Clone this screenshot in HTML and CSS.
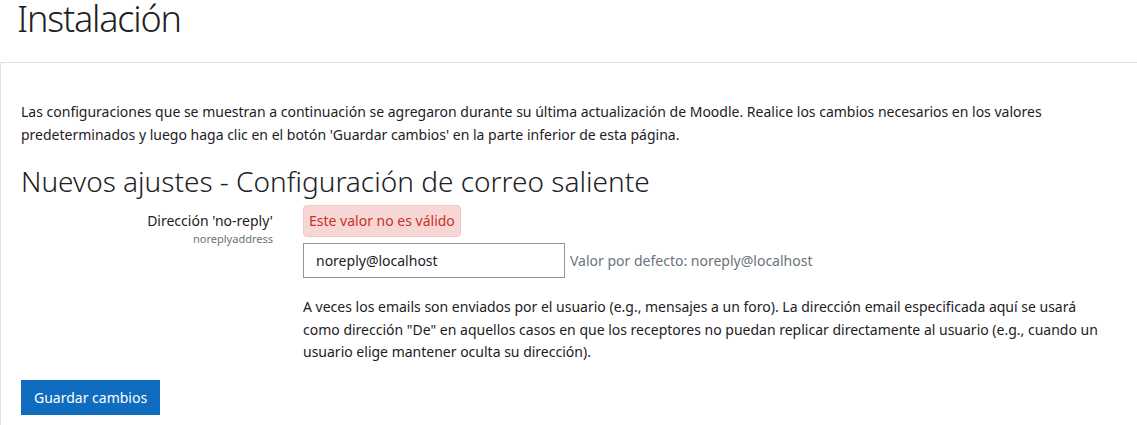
FILE: index.html
```html
<!DOCTYPE html>
<html lang="es">
<head>
<meta charset="utf-8">
<title>Instalación</title>
<link rel="stylesheet" href="styles.css">
</head>
<body>
<h1 class="page-title">Instalación</h1>
<div class="box">
  <p class="intro">Las configuraciones que se muestran a continuación se agregaron durante su última actualización de Moodle. Realice los cambios necesarios en los valores predeterminados y luego haga clic en el botón 'Guardar cambios' en la parte inferior de esta página.</p>
  <h2 class="section-title">Nuevos ajustes - Configuración de correo saliente</h2>
  <div class="setting">
    <div class="setting-label">
      <label class="label-main">Dirección 'no-reply'</label>
      <span class="label-key">noreplyaddress</span>
    </div>
    <div class="setting-body">
      <div class="error">Este valor no es válido</div>
      <div class="input-row">
        <input class="text-input" type="text" value="noreply@localhost">
        <span class="default">Valor por defecto: noreply@localhost</span>
      </div>
      <p class="desc">A veces los emails son enviados por el usuario (e.g., mensajes a un foro). La dirección email especificada aquí se usará como dirección "De" en aquellos casos en que los receptores no puedan replicar directamente al usuario (e.g., cuando un usuario elige mantener oculta su dirección).</p>
    </div>
  </div>
  <button class="btn-save" type="button">Guardar cambios</button>
</div>
</body>
</html>
```
FILE: styles.css
```css
html, body {
  margin: 0;
  padding: 0;
  background: #fff;
}
body {
  font-family: "Noto Sans", "Open Sans", sans-serif;
  font-size: 14px;
  color: #1d2125;
  overflow: hidden;
}
.page-title {
  margin: 0;
  padding: 0 0 0 17px;
  font-size: 36px;
  font-weight: 300;
  letter-spacing: -1.2px;
  line-height: 38px;
  height: 62px;
  box-sizing: border-box;
}
.box {
  border-top: 1px solid #dee2e6;
  border-left: 1px solid #dee2e6;
  padding: 38px 20px 20px 20px;
}
.intro {
  margin: 0;
  line-height: 22.5px;
}
.section-title {
  margin: 18px 0 5px 0;
  font-size: 28px;
  font-weight: 300;
  line-height: 34px;
}
.setting {
  display: flex;
}
.setting-label {
  width: 252px;
  display: flex;
  flex-direction: column;
  align-items: flex-end;
  padding-top: 7px;
}
.label-main {
  font-size: 14px;
  line-height: 22px;
}
.label-key {
  font-size: 11px;
  color: #6a737b;
  line-height: 14px;
}
.setting-body {
  margin-left: 30px;
  flex: 1;
}
.error {
  display: inline-block;
  margin-top: 2px;
  background: #f6d7d5;
  border: 1px solid #f0c8c5;
  color: #ca3120;
  border-radius: 4px;
  padding: 4px 5px;
  line-height: 22px;
  font-size: 14px;
}
.input-row {
  display: flex;
  align-items: center;
  margin-top: 6px;
}
.text-input {
  width: 262px;
  height: 35px;
  box-sizing: border-box;
  border: 1px solid #8f959e;
  border-radius: 0;
  padding: 0 12px;
  font-family: inherit;
  font-size: 14px;
  color: #1d2125;
  margin: 0;
}
.default {
  margin-left: 5px;
  color: #6a737b;
  font-size: 14px;
}
.desc {
  margin: 18px 0 0 0;
  max-width: 806px;
  line-height: 22.5px;
  font-size: 14px;
}
.btn-save {
  margin-top: 16px;
  background: #0f6cbf;
  color: #fff;
  border: none;
  border-radius: 0;
  font-family: inherit;
  font-size: 14px;
  height: 35px;
  padding: 0 13px;
}
```
